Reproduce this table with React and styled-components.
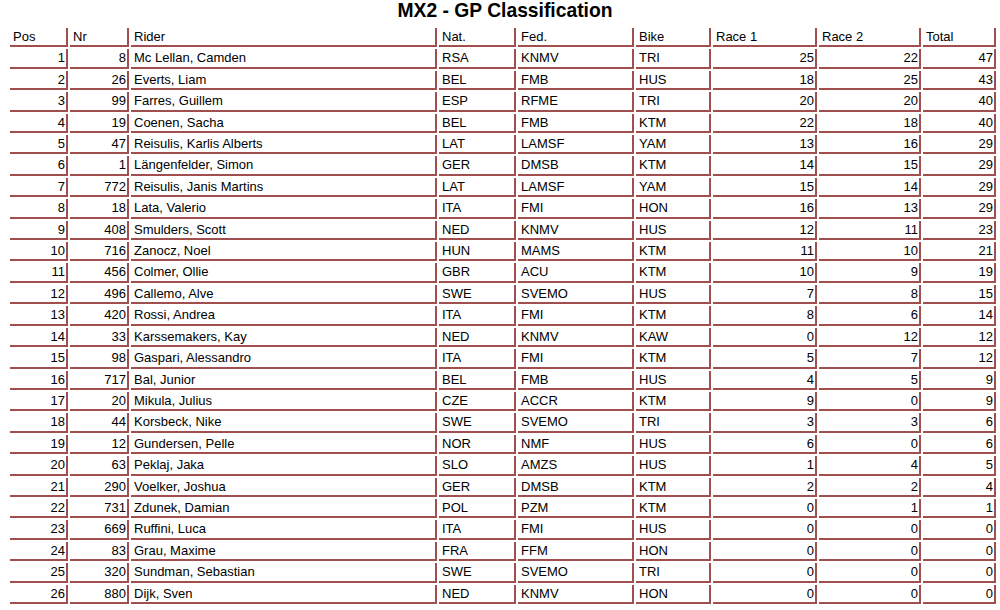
import React from "react";
import styled, { createGlobalStyle } from "styled-components";

const GlobalStyle = createGlobalStyle`
  html, body {
    margin: 0;
    padding: 0;
    background: #ffffff;
  }
  body {
    font-family: "Liberation Sans", Arial, sans-serif;
    color: #000;
  }
`;

const columns = [
  { key: "pos", label: "Pos", width: 58, align: "right" },
  { key: "nr", label: "Nr", width: 59, align: "right" },
  { key: "rider", label: "Rider", width: 306, align: "left" },
  { key: "nat", label: "Nat.", width: 77, align: "left" },
  { key: "fed", label: "Fed.", width: 116, align: "left" },
  { key: "bike", label: "Bike", width: 75, align: "left" },
  { key: "race1", label: "Race 1", width: 104, align: "right" },
  { key: "race2", label: "Race 2", width: 102, align: "right" },
  { key: "total", label: "Total", width: 73, align: "right" },
];

const rows = [
  [1, 8, "Mc Lellan, Camden", "RSA", "KNMV", "TRI", 25, 22, 47],
  [2, 26, "Everts, Liam", "BEL", "FMB", "HUS", 18, 25, 43],
  [3, 99, "Farres, Guillem", "ESP", "RFME", "TRI", 20, 20, 40],
  [4, 19, "Coenen, Sacha", "BEL", "FMB", "KTM", 22, 18, 40],
  [5, 47, "Reisulis, Karlis Alberts", "LAT", "LAMSF", "YAM", 13, 16, 29],
  [6, 1, "Längenfelder, Simon", "GER", "DMSB", "KTM", 14, 15, 29],
  [7, 772, "Reisulis, Janis Martins", "LAT", "LAMSF", "YAM", 15, 14, 29],
  [8, 18, "Lata, Valerio", "ITA", "FMI", "HON", 16, 13, 29],
  [9, 408, "Smulders, Scott", "NED", "KNMV", "HUS", 12, 11, 23],
  [10, 716, "Zanocz, Noel", "HUN", "MAMS", "KTM", 11, 10, 21],
  [11, 456, "Colmer, Ollie", "GBR", "ACU", "KTM", 10, 9, 19],
  [12, 496, "Callemo, Alve", "SWE", "SVEMO", "HUS", 7, 8, 15],
  [13, 420, "Rossi, Andrea", "ITA", "FMI", "KTM", 8, 6, 14],
  [14, 33, "Karssemakers, Kay", "NED", "KNMV", "KAW", 0, 12, 12],
  [15, 98, "Gaspari, Alessandro", "ITA", "FMI", "KTM", 5, 7, 12],
  [16, 717, "Bal, Junior", "BEL", "FMB", "HUS", 4, 5, 9],
  [17, 20, "Mikula, Julius", "CZE", "ACCR", "KTM", 9, 0, 9],
  [18, 44, "Korsbeck, Nike", "SWE", "SVEMO", "TRI", 3, 3, 6],
  [19, 12, "Gundersen, Pelle", "NOR", "NMF", "HUS", 6, 0, 6],
  [20, 63, "Peklaj, Jaka", "SLO", "AMZS", "HUS", 1, 4, 5],
  [21, 290, "Voelker, Joshua", "GER", "DMSB", "KTM", 2, 2, 4],
  [22, 731, "Zdunek, Damian", "POL", "PZM", "KTM", 0, 1, 1],
  [23, 669, "Ruffini, Luca", "ITA", "FMI", "HUS", 0, 0, 0],
  [24, 83, "Grau, Maxime", "FRA", "FFM", "HON", 0, 0, 0],
  [25, 320, "Sundman, Sebastian", "SWE", "SVEMO", "TRI", 0, 0, 0],
  [26, 880, "Dijk, Sven", "NED", "KNMV", "HON", 0, 0, 0],
];

export default function App() {
  return (
    <Page>
      <GlobalStyle />
      <Title>MX2 - GP Classification</Title>
      <Tabla>
        <colgroup>
          {columns.map((c) => (
            <col key={c.key} style={{ width: c.width }} />
          ))}
        </colgroup>
        <thead>
          <tr>
            {columns.map((c) => (
              <HeadCell key={c.key}>{c.label}</HeadCell>
            ))}
          </tr>
        </thead>
        <tbody>
          {rows.map((r) => (
            <tr key={r[0]}>
              {r.map((v, i) => (
                <Cell key={columns[i].key} $align={columns[i].align}>
                  {v}
                </Cell>
              ))}
            </tr>
          ))}
        </tbody>
      </Tabla>
    </Page>
  );
}

const Page = styled.div`
  width: 1000px;
  padding: 0 2px 0 8px;
  box-sizing: border-box;
`;

const Title = styled.h1`
  margin: 0;
  height: 26px;
  line-height: 21px;
  font-size: 19.3px;
  font-weight: bold;
  text-align: center;
  padding-left: 4px;
`;

const Tabla = styled.table`
  width: 990px;
  table-layout: fixed;
  border-collapse: separate;
  border-spacing: 2px 2px;
  font-size: 13px;
`;

const BaseCell = styled.td`
  box-sizing: border-box;
  height: 19.4px;
  padding: 0 1px 0 3px;
  line-height: 17.4px;
  border-right: 2px solid #a04e4e;
  border-bottom: 2px solid #a04e4e;
  white-space: nowrap;
  overflow: hidden;
  vertical-align: middle;
`;

const HeadCell = styled(BaseCell).attrs({ as: "th" })`
  font-weight: normal;
  text-align: left;
  padding-top: 1px;
  line-height: 16.4px;
`;

const Cell = styled(BaseCell)`
  text-align: ${(p) => p.$align};
  padding-top: 1px;
  line-height: 16.4px;
`;
